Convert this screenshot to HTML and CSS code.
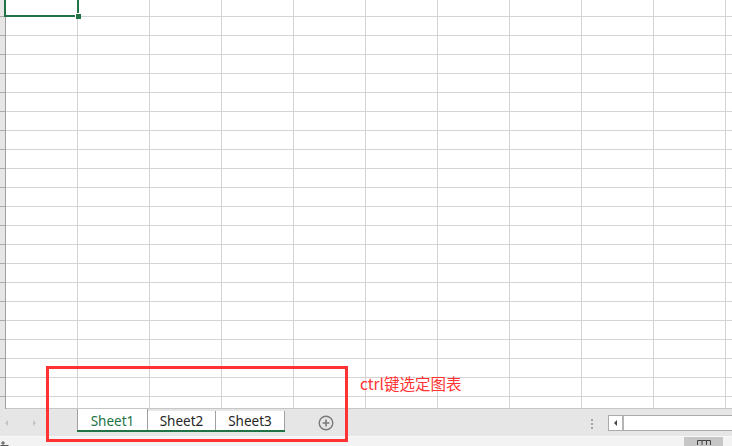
FILE: index.html
```html
<!DOCTYPE html>
<html lang="zh-CN">
<head>
  <meta charset="UTF-8">
  <title>Sheet</title>
  <link rel="stylesheet" href="styles.css">
</head>
<body>

  <div class="app">
    <!-- grille -->
    <div class="sheet">
      <div class="rowhead"></div>
      <div class="cells">
        <div class="selection"><span class="handle"></span></div>
      </div>
    </div>

    <!-- barre des onglets -->
    <div class="tabbar">
      <div class="nav">
        <span class="arrow left"></span>
        <span class="arrow right"></span>
      </div>
      <div class="tabs">
        <div class="tab active">Sheet1</div>
        <div class="tab">Sheet2</div>
        <div class="tab">Sheet3</div>
      </div>
      <div class="add">
        <svg width="16" height="16" viewBox="0 0 16 16">
          <circle cx="8" cy="8" r="6.8" fill="none" stroke="#7a7a7a" stroke-width="1.4"/>
          <path d="M8 4.6v6.8M4.6 8h6.8" stroke="#7a7a7a" stroke-width="1.6"/>
        </svg>
      </div>
      <div class="spacer"></div>
      <div class="dots"><i></i><i></i><i></i></div>
      <div class="hscroll">
        <span class="hbtn"><span class="tri"></span></span>
        <span class="track"></span>
      </div>
    </div>

    <!-- barre d'état -->
    <div class="status">
      <svg class="rec" width="9" height="6" viewBox="0 0 9 6">
        <path d="M1 3h4M3 1v4M0.5 5.5h8" stroke="#555" stroke-width="1"/>
      </svg>
      <div class="spacer"></div>
      <div class="view">
        <svg width="14" height="8" viewBox="0 0 14 8">
          <path d="M0.5 3.5h13v5h-13zM5 3.5v5M9.5 3.5v5" fill="none" stroke="#444" stroke-width="1"/>
        </svg>
      </div>
      <div class="tail"></div>
    </div>

    <!-- annotation -->
    <div class="mark"></div>
    <div class="note">ctrl键选定图表</div>
  </div>

</body>
</html>
```

FILE: styles.css
```css
:root {
  --green: #217346;
  --grid: #d4d4d4;
  --bar: #e6e6e6;
  --red: #ff3333;
}

body {
  margin: 0;
  font-family: 'Noto Sans', 'Noto Sans CJK SC', sans-serif;
  overflow: hidden;
}

.app {
  position: relative;
  width: 732px;
  height: 446px;
  display: flex;
  flex-direction: column;
  background: #fff;
}

/* Grille */
.sheet {
  height: 409px;
  display: flex;
}

.rowhead {
  width: 5px;
  border-right: 1px solid #a0a0a0;
  background:
    linear-gradient(to bottom, transparent 18px, #ababab 18px 19px) 0 -2px / 100% 19px,
    var(--bar);
}

.cells {
  position: relative;
  flex: 1;
  border-bottom: 1px solid #c6c6c6;
  background:
    linear-gradient(to right, transparent 71px, var(--grid) 71px 72px) 0 0 / 72px 100%,
    linear-gradient(to bottom, transparent 18px, var(--grid) 18px 19px) 0 -2px / 100% 19px,
    #fff;
}

.selection {
  position: absolute;
  left: -2px;
  top: -4px;
  width: 75px;
  height: 21px;
  box-sizing: border-box;
  border: 2px solid var(--green);
}

.handle {
  position: absolute;
  right: -4px;
  bottom: -4px;
  width: 5px;
  height: 5px;
  background: var(--green);
  border: 1px solid #fff;
  border-bottom: 0;
  border-right: 0;
}

/* Onglets */
.tabbar {
  height: 27px;
  display: flex;
  background: var(--bar);
  border-bottom: 1px solid #f8f8f8;
}

.nav {
  width: 77px;
  display: flex;
  align-items: center;
  padding-left: 5px;
  box-sizing: border-box;
}

.arrow {
  width: 0;
  height: 0;
  border-top: 3px solid transparent;
  border-bottom: 3px solid transparent;
}

.arrow.left {
  border-right: 3px solid #c4c4c4;
  margin-right: 25px;
}

.arrow.right {
  border-left: 3px solid #c4c4c4;
}

.tabs {
  display: flex;
  align-items: flex-end;
  height: 22px;
  margin-top: -1px;
  border-bottom: 2px solid var(--green);
}

.tab {
  height: 19px;
  line-height: 21px;
  background: #fff;
  border-right: 1px solid #a0a0a0;
  width: 67px;
  text-align: center;
  font-size: 13.5px;
  color: #262626;
}

.tab.active {
  height: 22px;
  line-height: 26px;
  width: 69px;
  border-left: 1px solid #a0a0a0;
  color: var(--green);
}

.tab:last-child {
  width: 68px;
}

.add {
  margin-left: 33px;
  display: flex;
  align-items: center;
  padding-top: 1px;
}

.spacer {
  flex: 1;
}

.dots {
  width: 3px;
  display: flex;
  flex-direction: column;
  justify-content: center;
  gap: 2px;
  margin-right: 14px;
  padding-top: 2px;
}

.dots i {
  width: 2px;
  height: 2px;
  background: #a6a6a6;
}

.hscroll {
  width: 124px;
  height: 16px;
  margin-top: 6px;
  display: flex;
  box-sizing: border-box;
  border: 1px solid #ababab;
  border-right: 0;
  background: #fff;
}

.hbtn {
  width: 13px;
  border-right: 2px solid #b4b4b4;
  display: flex;
  align-items: center;
  justify-content: center;
}

.tri {
  width: 0;
  height: 0;
  border-top: 3px solid transparent;
  border-bottom: 3px solid transparent;
  border-right: 3px solid #444;
}

.track {
  flex: 1;
}

/* Barre d'état */
.status {
  flex: 1;
  display: flex;
  background: #f3f3f3;
}

.rec {
  margin-top: 3px;
}

.view {
  width: 39px;
  background: #c6c6c6;
  display: flex;
  justify-content: center;
  align-items: flex-start;
}

.tail {
  width: 9px;
}

/* Annotation */
.mark {
  position: absolute;
  left: 46px;
  top: 366px;
  width: 302px;
  height: 76px;
  box-sizing: border-box;
  border: 3px solid var(--red);
}

.note {
  position: absolute;
  left: 360px;
  top: 372px;
  font-family: 'Noto Sans CJK SC', sans-serif;
  font-size: 15.5px;
  line-height: 22px;
  color: var(--red);
}
```
